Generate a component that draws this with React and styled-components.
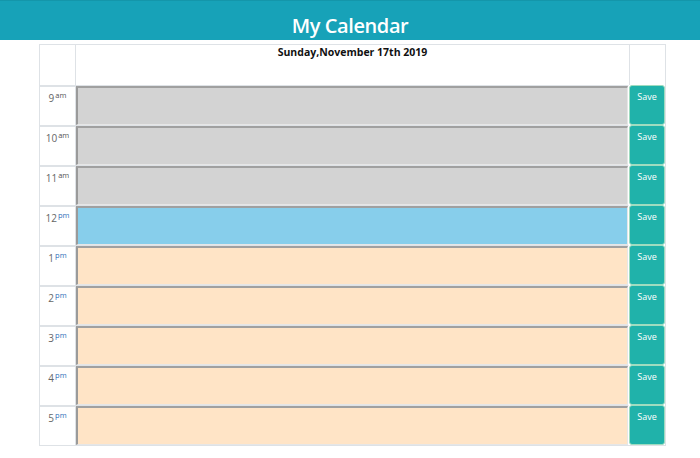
import React from 'react';
import styled, { createGlobalStyle } from 'styled-components';

const GlobalStyle = createGlobalStyle`
    body {
        margin: 0;
        background: #fff;
        font-family: 'Open Sans', 'Liberation Sans', sans-serif;
    }
`;

const Header = styled.header`
    height: 40px;
    background: #17a2b8;
    display: flex;
    justify-content: center;
    align-items: center;
    border-top: 1px solid #1496aa;
    box-sizing: border-box;
`;

const Title = styled.h1`
    margin: 9px 0 0;
    color: #fff;
    font-size: 20px;
    font-weight: 600;
    letter-spacing: -0.4px;
`;

const Planner = styled.div`
    width: 627px;
    margin: 4px 0 0 39px;
    display: grid;
    grid-template-columns: 35px 1fr 36px;
    grid-auto-rows: 40px;
    border: 1px solid #dee2e6;
    box-sizing: border-box;
`;

const HeadCell = styled.div`
    height: 40px;
    border-left: ${({ first }) => (first ? 'none' : '1px solid #dee2e6')};
    box-sizing: border-box;
    text-align: center;
    font-size: 10.5px;
    font-weight: 700;
    color: #111;
    line-height: 14px;
`;

const HourCell = styled.div`
    border-top: 2px solid #dee2e6;
    box-sizing: border-box;
    text-align: center;
    font-size: 10px;
    color: #666;
    padding-top: 2px;
    line-height: 12px;
`;

const Suffix = styled.sup`
    font-size: 7.5px;
    color: ${({ pm }) => (pm ? '#2f6fb8' : '#555')};
    vertical-align: 4px;
    margin-left: 1px;
`;

const Entry = styled.textarea`
    display: block;
    width: 100%;
    height: 100%;
    margin: 0;
    resize: none;
    box-sizing: border-box;
    border-style: solid;
    border-width: 2px 1px 1px 2px;
    border-color: #a0a0a0 #e6e6e6 #e6e6e6 #9a9a9a;
    background: ${({ tense }) =>
        tense === 'past' ? '#d3d3d3' : tense === 'present' ? '#87ceeb' : '#ffe4c6'};
    font: inherit;
`;

const EntryCell = styled.div`
    border-top: 1px solid #dee2e6;
    border-left: 1px solid #dee2e6;
    border-right: 1px solid #fff;
    box-sizing: border-box;
`;

const SaveButton = styled.button`
    margin: 0;
    height: 40px;
    width: 36px;
    box-sizing: border-box;
    background: #20b2aa;
    color: #fff;
    border: 1px solid #9fdcc0;
    border-radius: 3px;
    font-family: 'Open Sans', sans-serif;
    font-size: 9px;
    padding: 4px 0 0;
    display: flex;
    justify-content: center;
    align-items: flex-start;
    cursor: pointer;
`;

const hours = [
    { h: 9, s: 'am', tense: 'past' },
    { h: 10, s: 'am', tense: 'past' },
    { h: 11, s: 'am', tense: 'past' },
    { h: 12, s: 'pm', tense: 'present' },
    { h: 1, s: 'pm', tense: 'future' },
    { h: 2, s: 'pm', tense: 'future' },
    { h: 3, s: 'pm', tense: 'future' },
    { h: 4, s: 'pm', tense: 'future' },
    { h: 5, s: 'pm', tense: 'future' },
];

export default function App() {
    return (
        <>
            <GlobalStyle />
            <Header>
                <Title>My Calendar</Title>
            </Header>
            <Planner>
                <HeadCell first />
                <HeadCell>Sunday,November 17th 2019</HeadCell>
                <HeadCell />
                {hours.map(({ h, s, tense }) => (
                    <React.Fragment key={h}>
                        <HourCell>
                            {h}
                            <Suffix pm={s === 'pm'}>{s}</Suffix>
                        </HourCell>
                        <EntryCell>
                            <Entry tense={tense} />
                        </EntryCell>
                        <SaveButton>Save</SaveButton>
                    </React.Fragment>
                ))}
            </Planner>
        </>
    );
}
